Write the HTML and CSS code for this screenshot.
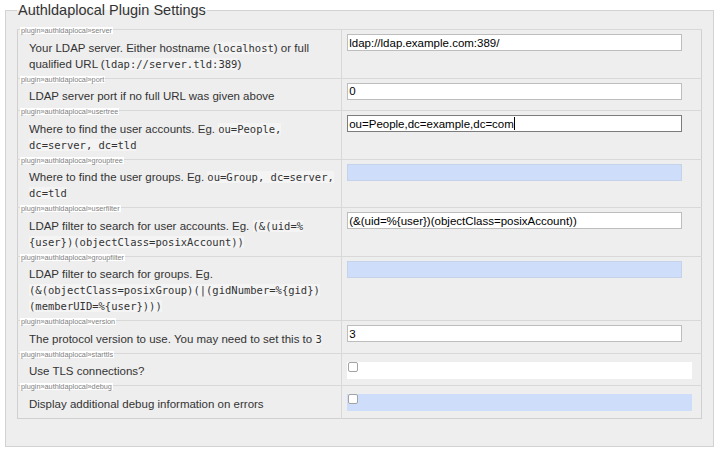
FILE: index.html
```html
<!DOCTYPE html>
<html>
<head>
<meta charset="utf-8">
<title>Authldaplocal Plugin Settings</title>
<link rel="stylesheet" href="styles.css">
</head>
<body>
<fieldset class="settings">
  <legend>Authldaplocal Plugin Settings</legend>
  <table class="config">
    <tr>
      <td class="label"><span class="outkey">plugin»authldaplocal»server</span><label>Your LDAP server. Either hostname (<code>localhost</code>) or full qualified URL (<code>ldap://server.tld:389</code>)</label></td>
      <td class="value"><input class="edit" type="text" value="ldap://ldap.example.com:389/"></td>
    </tr>
    <tr>
      <td class="label"><span class="outkey">plugin»authldaplocal»port</span><label>LDAP server port if no full URL was given above</label></td>
      <td class="value"><input class="edit" type="text" value="0"></td>
    </tr>
    <tr>
      <td class="label"><span class="outkey">plugin»authldaplocal»usertree</span><label>Where to find the user accounts. Eg. <code>ou=People, dc=server, dc=tld</code></label></td>
      <td class="value"><span class="field"><input class="edit focus" type="text" value="ou=People,dc=example,dc=com"><span class="caret">ou=People,dc=example,dc=com</span></span></td>
    </tr>
    <tr>
      <td class="label"><span class="outkey">plugin»authldaplocal»grouptree</span><label>Where to find the user groups. Eg. <code>ou=Group, dc=server, dc=tld</code></label></td>
      <td class="value"><input class="edit default" type="text" value=""></td>
    </tr>
    <tr>
      <td class="label"><span class="outkey">plugin»authldaplocal»userfilter</span><label>LDAP filter to search for user accounts. Eg. <code>(&amp;(uid=%{user})(objectClass=posixAccount))</code></label></td>
      <td class="value"><input class="edit" type="text" value="(&amp;(uid=%{user})(objectClass=posixAccount))"></td>
    </tr>
    <tr>
      <td class="label"><span class="outkey">plugin»authldaplocal»groupfilter</span><label>LDAP filter to search for groups. Eg. <code><span class="nw">(&amp;(objectClass=posixGroup)</span>(|(gidNumber=%{gid})(memberUID=%{user})))</code></label></td>
      <td class="value"><input class="edit default" type="text" value=""></td>
    </tr>
    <tr>
      <td class="label"><span class="outkey">plugin»authldaplocal»version</span><label>The protocol version to use. You may need to set this to <code>3</code></label></td>
      <td class="value"><input class="edit" type="text" value="3"></td>
    </tr>
    <tr>
      <td class="label"><span class="outkey">plugin»authldaplocal»starttls</span><label>Use TLS connections?</label></td>
      <td class="value"><span class="cbwrap"><input class="cb" type="checkbox"></span></td>
    </tr>
    <tr>
      <td class="label"><span class="outkey">plugin»authldaplocal»debug</span><label>Display additional debug information on errors</label></td>
      <td class="value"><span class="cbwrap default"><input class="cb" type="checkbox"></span></td>
    </tr>
  </table>
</fieldset>
</body>
</html>
```
FILE: styles.css
```css
html, body {
  margin: 0;
  padding: 0;
  background: #fff;
}
body {
  font-family: "Liberation Sans", Arial, sans-serif;
  font-size: 11.5px;
  color: #333;
}
.settings {
  margin: 2px 6px 0 5px;
  padding: 11px 11px 27px;
  border: 1px solid #d2d2d2;
  background: #eee;
  min-width: 0;
}
.settings legend {
  font-size: 14.5px;
  padding: 0 1px;
  color: #333;
}
.config {
  width: 100%;
  border-collapse: collapse;
  border: 1px solid #d0d0d0;
}
.config td {
  border-top: 1px solid #d8d8d8;
  vertical-align: top;
}
.label {
  width: 47.4%;
  padding: 9.5px 4px 6px 11px;
  line-height: 16px;
  position: relative;
  border-right: 1px solid #d8d8d8;
}
.outkey {
  position: absolute;
  top: -3px;
  left: 2px;
  font-size: 7.3px;
  line-height: 7px;
  background: #fff;
  color: #808080;
  padding: 0 1px;
  white-space: nowrap;
}
code {
  font-family: "DejaVu Sans Mono", monospace;
  font-size: 10.5px;
  background: #f4f4f4;
}
.nw {
  white-space: nowrap;
}
.value {
  padding: 4px 9px 0 5px;
}
.field {
  display: block;
  position: relative;
}
.edit {
  display: block;
  width: 97%;
  height: 17px;
  box-sizing: border-box;
  margin: 0;
  padding: 0 1px;
  border: 1px solid #bdbdbd;
  background: #fff;
  font: 11.5px "Liberation Sans", Arial, sans-serif;
  color: #000;
  outline: none;
}
.edit.focus {
  border-color: #7c7c7c;
}
.edit.default {
  background: #cedefa;
  border-color: #c4d2ea;
}
.caret {
  position: absolute;
  left: 2px;
  top: 2px;
  height: 13px;
  font: 11.5px "Liberation Sans", Arial, sans-serif;
  color: transparent;
  border-right: 1px solid #000;
  pointer-events: none;
}
.cbwrap {
  display: block;
  height: 17px;
  background: #fff;
}
.cbwrap.default {
  background: #cedefa;
}
.cb {
  appearance: none;
  -webkit-appearance: none;
  display: block;
  width: 10px;
  height: 10px;
  margin: 4px 0 0 1px;
  border: 1px solid #a3a3a3;
  border-radius: 2px;
  background: #fff;
}
```
